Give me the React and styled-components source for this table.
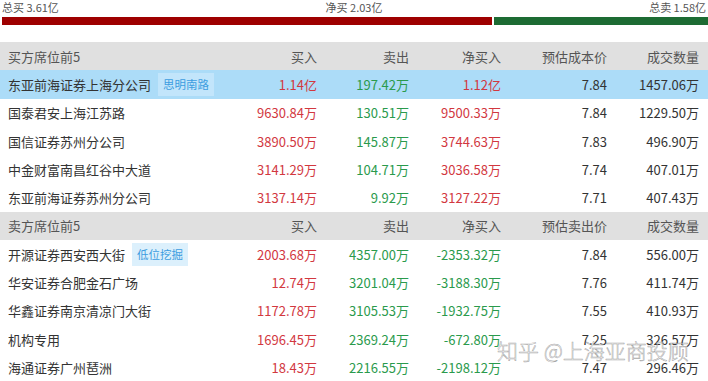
import React from 'react';
import styled, { createGlobalStyle } from 'styled-components';

const GlobalStyle = createGlobalStyle`
  html, body {
    margin: 0;
    padding: 0;
    background: #fff;
    font-family: "Noto Sans CJK SC", "Noto Sans", sans-serif;
  }
`;

const red = '#d2383f';
const green = '#2a9a4c';

const buyers = [
  { name: '东亚前海证券上海分公司', tag: '思明南路', buy: '1.14亿', sell: '197.42万', net: '1.12亿', price: '7.84', vol: '1457.06万', active: true },
  { name: '国泰君安上海江苏路', buy: '9630.84万', sell: '130.51万', net: '9500.33万', price: '7.84', vol: '1229.50万' },
  { name: '国信证券苏州分公司', buy: '3890.50万', sell: '145.87万', net: '3744.63万', price: '7.83', vol: '496.90万' },
  { name: '中金财富南昌红谷中大道', buy: '3141.29万', sell: '104.71万', net: '3036.58万', price: '7.74', vol: '407.01万' },
  { name: '东亚前海证券苏州分公司', buy: '3137.14万', sell: '9.92万', net: '3127.22万', price: '7.71', vol: '407.43万' },
];

const sellers = [
  { name: '开源证券西安西大街', tag: '低位挖掘', buy: '2003.68万', sell: '4357.00万', net: '-2353.32万', price: '7.84', vol: '556.00万' },
  { name: '华安证券合肥金石广场', buy: '12.74万', sell: '3201.04万', net: '-3188.30万', price: '7.76', vol: '411.74万' },
  { name: '华鑫证券南京清凉门大街', buy: '1172.78万', sell: '3105.53万', net: '-1932.75万', price: '7.55', vol: '410.93万' },
  { name: '机构专用', buy: '1696.45万', sell: '2369.24万', net: '-672.80万', price: '7.25', vol: '326.57万' },
  { name: '海通证券广州琶洲', buy: '18.43万', sell: '2216.55万', net: '-2198.12万', price: '7.47', vol: '296.46万' },
];

function Section({ title, priceLabel, rows, netTone }) {
  return (
    <>
      <HeadRow>
        <Cell $left>{title}</Cell>
        <Cell>买入</Cell>
        <Cell>卖出</Cell>
        <Cell>净买入</Cell>
        <Cell>{priceLabel}</Cell>
        <Cell>成交数量</Cell>
      </HeadRow>
      {rows.map(r => (
        <Row key={r.name} $active={r.active}>
          <Cell $left>
            {r.name}
            {r.tag && <Tag $active={r.active}>{r.tag}</Tag>}
          </Cell>
          <Cell $tone="red">{r.buy}</Cell>
          <Cell $tone="green">{r.sell}</Cell>
          <Cell $tone={netTone}>{r.net}</Cell>
          <Cell>{r.price}</Cell>
          <Cell>{r.vol}</Cell>
        </Row>
      ))}
    </>
  );
}

export default function App() {
  return (
    <Root>
      <GlobalStyle />
      <Totals>
        <span>总买 3.61亿</span>
        <span>净买 2.03亿</span>
        <span>总卖 1.58亿</span>
      </Totals>
      <Bar>
        <BuyPart style={{ width: `${(490 / 706) * 100}%` }} />
        <SellPart />
      </Bar>
      <Table>
        <Section title="买方席位前5" priceLabel="预估成本价" rows={buyers} netTone="red" />
        <Section title="卖方席位前5" priceLabel="预估卖出价" rows={sellers} netTone="green" />
      </Table>
      <Watermark>知乎 @上海亚商投顾</Watermark>
    </Root>
  );
}

const Root = styled.div`
  position: relative;
  width: 708px;
  height: 381px;
  overflow: hidden;
  background: #fff;
`;

const Totals = styled.div`
  display: grid;
  grid-template-columns: 1fr auto 1fr;
  padding: 0 2px;
  height: 16px;
  font-size: 11px;
  line-height: 15px;
  color: #555;

  span:nth-child(2) { text-align: center; }
  span:nth-child(3) { text-align: right; }
`;

const Bar = styled.div`
  display: flex;
  gap: 2px;
  margin: 1px 0 0 2px;
  height: 8px;
`;

const BuyPart = styled.div`
  background: #9e0000;
`;

const SellPart = styled.div`
  flex: 1;
  background: #1d6b33;
`;

const Table = styled.div`
  margin-top: 17px;
`;

const Row = styled.div`
  display: grid;
  grid-template-columns: 1fr 92px 92px 92px 106px 92px;
  align-items: center;
  height: 28.3px;
  padding: 0 9px 0 8px;
  font-size: 13px;
  color: #333;
  background: ${p => (p.$active ? '#acdcf8' : '#fff')};
`;

const HeadRow = styled(Row)`
  background: #e0e0e0;
  color: #555;
`;

const Cell = styled.div`
  display: flex;
  align-items: center;
  justify-content: ${p => (p.$left ? 'flex-start' : 'flex-end')};
  white-space: nowrap;
  color: ${p => (p.$tone === 'red' ? red : p.$tone === 'green' ? green : 'inherit')};
`;

const Tag = styled.span`
  margin-left: 7px;
  padding: 3px 5px;
  font-size: 11.5px;
  line-height: 17px;
  color: #3c9de0;
  background: ${p => (p.$active ? '#c2e5fb' : '#dcf0fc')};
`;

const Watermark = styled.div`
  position: absolute;
  left: 497px;
  top: 338px;
  font-size: 21px;
  line-height: 24px;
  font-weight: 300;
  white-space: nowrap;
  color: rgba(255, 255, 255, 0.55);
  -webkit-text-stroke: 0.5px rgba(110, 110, 110, 0.65);
  pointer-events: none;
`;
